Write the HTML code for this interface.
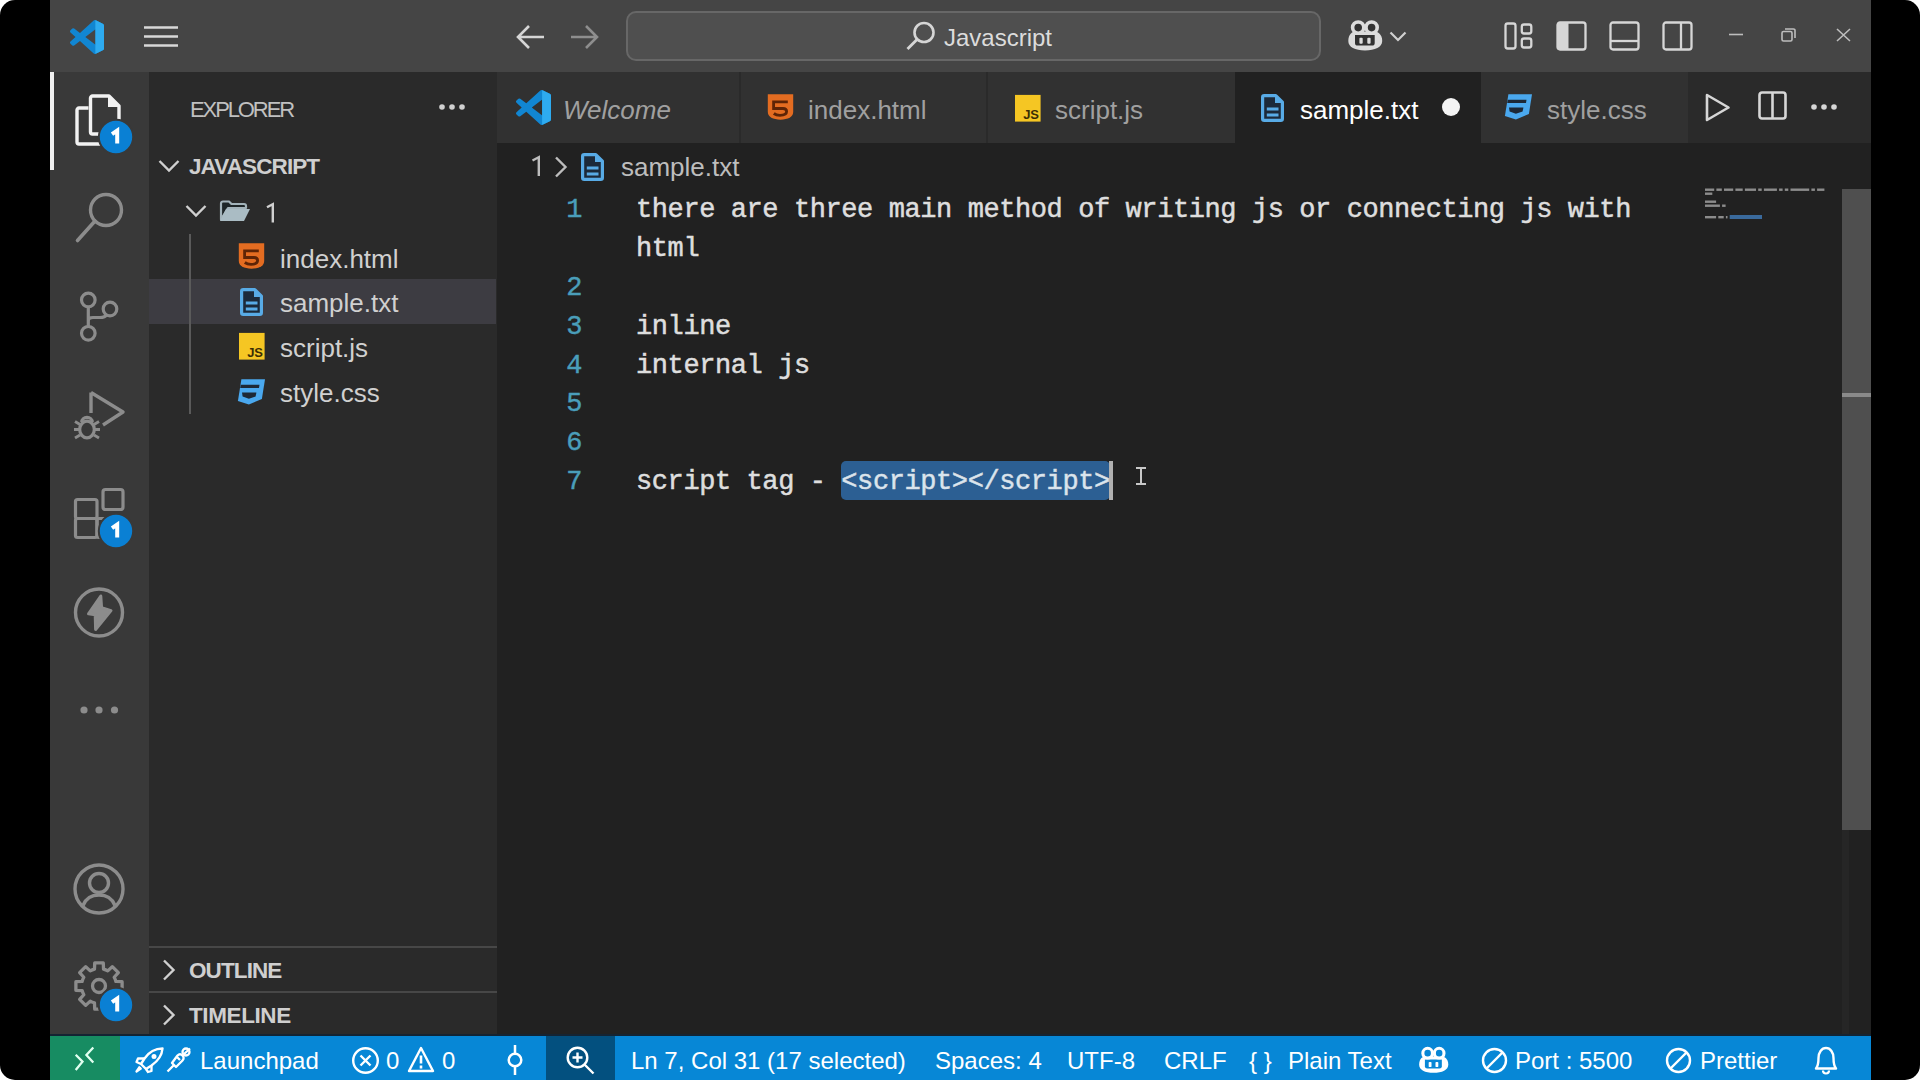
<!DOCTYPE html>
<html><head><meta charset="utf-8">
<style>
*{box-sizing:border-box;margin:0;padding:0}
html,body{width:1920px;height:1080px;overflow:hidden;background:#fff}
body{font-family:"Liberation Sans",sans-serif;position:relative}
.abs{position:absolute}
#frame{position:absolute;left:0;top:0;width:1920px;height:1080px;background:#000;border-radius:15px;overflow:hidden}
#title{left:50px;top:0;width:1821px;height:72px;background:#454545}
#act{left:50px;top:72px;width:99px;height:964px;background:#393939}
#side{left:149px;top:72px;width:348px;height:964px;background:#2a2a2a}
#tabs{left:497px;top:72px;width:1374px;height:71px;background:#2a2a2a}
#editor{left:497px;top:143px;width:1374px;height:893px;background:#212121}
#status{left:50px;top:1036px;width:1821px;height:44px;background:#0787d6}
.tab{position:absolute;top:72px;height:71px;background:#313131;border-right:2px solid #2a2a2a}
.tab.active{background:#212121}
.ttxt{position:absolute;top:95px;font-size:26px;color:#a0a0a0;white-space:pre;line-height:30px}
.row{position:absolute;left:149px;width:348px;height:45px}
.ftxt{position:absolute;font-size:26px;color:#d0d0d0;white-space:pre;line-height:30px}
.code{position:absolute;left:636px;margin-top:2px;-webkit-text-stroke:0.5px #dedede;font-family:"Liberation Mono",monospace;font-size:27px;letter-spacing:-0.41px;color:#dedede;white-space:pre;line-height:39px}
.ln{position:absolute;left:540px;margin-top:2px;-webkit-text-stroke:0.4px #4a9eba;width:42px;text-align:right;font-family:"Liberation Mono",monospace;font-size:27px;letter-spacing:-0.41px;color:#4a9eba;line-height:39px}
.st{position:absolute;top:1046px;font-size:24px;color:#fff;white-space:pre;line-height:30px}
svg{position:absolute;overflow:visible}
.badge{width:33px;height:33px;border-radius:50%;background:#0a7fd2;color:#fff;font-weight:bold;font-size:19px;line-height:33px;text-align:center;box-shadow:0 0 0 2px #393939}
</style></head><body>
<div id="frame">
<div id="title" class="abs"></div>
<div id="act" class="abs"></div>
<div id="side" class="abs"></div>
<div id="tabs" class="abs"></div>
<div id="editor" class="abs"></div>
<div id="status" class="abs"></div>


<!-- activity bar -->
<div class="abs" style="left:50px;top:72px;width:4px;height:98px;background:#f0f0f0"></div>
<svg style="left:74px;top:94px" width="50" height="52" viewBox="0 0 50 52"><path d="M14.5 14H5a2 2 0 0 0-2 2V48a2 2 0 0 0 2 2H28a2 2 0 0 0 2-2V42" fill="none" stroke="#f2f2f2" stroke-width="3.4"/><path d="M16.5 4a2 2 0 0 1 2-2H35L45 12V38a2 2 0 0 1-2 2H18.5a2 2 0 0 1-2-2z" fill="none" stroke="#f2f2f2" stroke-width="3.4" stroke-linejoin="round"/><path d="M35 2V12H45" fill="#f2f2f2" stroke="#f2f2f2" stroke-width="2"/></svg>
<svg style="left:75px;top:192px" width="50" height="52" viewBox="0 0 50 52"><circle cx="31" cy="18" r="15.5" fill="none" stroke="#8c8c8c" stroke-width="3.4"/><path d="M20 29L2.5 48.5" stroke="#8c8c8c" stroke-width="3.6" stroke-linecap="round"/></svg>
<svg style="left:75px;top:288px" width="50" height="56" viewBox="0 0 50 56"><circle cx="13.3" cy="12" r="6.8" fill="none" stroke="#8c8c8c" stroke-width="3.2"/><circle cx="35" cy="21" r="6.8" fill="none" stroke="#8c8c8c" stroke-width="3.2"/><circle cx="13.3" cy="45.3" r="6.8" fill="none" stroke="#8c8c8c" stroke-width="3.2"/><path d="M13.3 18.8V38.5M13.3 33C13.3 31 15 29.5 18 29.5H25C29 29.5 31 28 32 26.5" fill="none" stroke="#8c8c8c" stroke-width="3.2"/></svg>
<svg style="left:72px;top:388px" width="56" height="56" viewBox="0 0 56 56"><path d="M19 4.5V25M19 4.5L51 24L31 37" fill="none" stroke="#8c8c8c" stroke-width="3.4" stroke-linejoin="round"/><ellipse cx="15" cy="41.5" rx="7.3" ry="8.3" fill="none" stroke="#8c8c8c" stroke-width="3.2"/><path d="M9.8 34a5.2 4.6 0 0 1 10.4 0" fill="none" stroke="#8c8c8c" stroke-width="3.2"/><path d="M2 41.5H7.5M22.5 41.5H28M3 33.5L8 36.5M27 33.5L22 36.5M3 50L8 47M27 50L22 47" stroke="#8c8c8c" stroke-width="2.8"/></svg>
<svg style="left:73px;top:487px" width="54" height="54" viewBox="0 0 54 54"><rect x="2.5" y="12.5" width="21.5" height="19" rx="2" fill="none" stroke="#8c8c8c" stroke-width="3.2"/><rect x="2.5" y="31.5" width="21.5" height="19" rx="2" fill="none" stroke="#8c8c8c" stroke-width="3.2"/><rect x="24" y="31.5" width="21.5" height="19" rx="2" fill="none" stroke="#8c8c8c" stroke-width="3.2"/><rect x="30" y="2.5" width="20" height="20" rx="2.5" fill="none" stroke="#8c8c8c" stroke-width="3.2"/></svg>
<svg style="left:73px;top:586px" width="52" height="52" viewBox="0 0 52 52"><circle cx="26" cy="26.5" r="23.5" fill="none" stroke="#8c8c8c" stroke-width="3.4"/><path d="M27.8 10L15.5 27.8L22.2 28.8L22.6 43.5L38 24.6L28.6 21.8Z" fill="#8c8c8c" stroke="#8c8c8c" stroke-width="3" stroke-linejoin="round"/></svg>
<svg style="left:79px;top:705px" width="40" height="10" viewBox="0 0 40 10"><circle cx="5" cy="5" r="3.6" fill="#8c8c8c"/><circle cx="20" cy="5" r="3.6" fill="#8c8c8c"/><circle cx="35.5" cy="5" r="3.6" fill="#8c8c8c"/></svg>
<svg style="left:73px;top:863px" width="52" height="52" viewBox="0 0 52 52"><circle cx="26" cy="26" r="24" fill="none" stroke="#8c8c8c" stroke-width="3.4"/><circle cx="26" cy="20" r="9.5" fill="none" stroke="#8c8c8c" stroke-width="3.4"/><path d="M10 42.5C13 35 19 32 26 32S39 35 42 42.5" fill="none" stroke="#8c8c8c" stroke-width="3.4"/></svg>
<svg style="left:73px;top:960px" width="52" height="52" viewBox="-26 -26 52 52"><path fill="none" stroke="#8c8c8c" stroke-width="3.3" stroke-linejoin="round" d="M-4.53 -16.90L-4.28 -23.11L4.28 -23.11L4.53 -16.90A17.5 17.5 0 0 1 8.75 -15.16L13.31 -19.37L19.37 -13.31L15.16 -8.75A17.5 17.5 0 0 1 16.90 -4.53L23.11 -4.28L23.11 4.28L16.90 4.53A17.5 17.5 0 0 1 15.16 8.75L19.37 13.31L13.31 19.37L8.75 15.16A17.5 17.5 0 0 1 4.53 16.90L4.28 23.11L-4.28 23.11L-4.53 16.90A17.5 17.5 0 0 1 -8.75 15.16L-13.31 19.37L-19.37 13.31L-15.16 8.75A17.5 17.5 0 0 1 -16.90 4.53L-23.11 4.28L-23.11 -4.28L-16.90 -4.53A17.5 17.5 0 0 1 -15.16 -8.75L-19.37 -13.31L-13.31 -19.37L-8.75 -15.16A17.5 17.5 0 0 1 -4.53 -16.90Z"/><circle cx="0" cy="0" r="6.5" fill="none" stroke="#8c8c8c" stroke-width="3.3"/></svg>
<svg style="left:96.5px;top:117.5px" width="38" height="38" viewBox="0 0 38 38"><circle cx="19" cy="19" r="17.2" fill="#0a80d4" stroke="#393939" stroke-width="2"/><path d="M15 16.2L20.2 12.6V25.5" fill="none" stroke="#fff" stroke-width="4" stroke-linejoin="miter"/></svg>
<svg style="left:96.5px;top:511.5px" width="38" height="38" viewBox="0 0 38 38"><circle cx="19" cy="19" r="17.2" fill="#0a80d4" stroke="#393939" stroke-width="2"/><path d="M15 16.2L20.2 12.6V25.5" fill="none" stroke="#fff" stroke-width="4" stroke-linejoin="miter"/></svg>
<svg style="left:96.5px;top:985.5px" width="38" height="38" viewBox="0 0 38 38"><circle cx="19" cy="19" r="17.2" fill="#0a80d4" stroke="#393939" stroke-width="2"/><path d="M15 16.2L20.2 12.6V25.5" fill="none" stroke="#fff" stroke-width="4" stroke-linejoin="miter"/></svg>


<!-- sidebar -->
<div class="abs" style="left:190px;top:95px;font-size:22px;color:#c0c0c0;line-height:30px;letter-spacing:-2.1px;white-space:pre">EXPLORER</div>
<svg style="left:438px;top:103px" width="28" height="8" viewBox="0 0 28 8"><circle cx="4" cy="4" r="2.8" fill="#d0d0d0"/><circle cx="14" cy="4" r="2.8" fill="#d0d0d0"/><circle cx="24" cy="4" r="2.8" fill="#d0d0d0"/></svg>
<svg style="left:158px;top:159px" width="22" height="14" viewBox="0 0 22 14"><path d="M1.5 2L11 11.5L20.5 2" fill="none" stroke="#d0d0d0" stroke-width="2.4"/></svg>
<div class="abs" style="left:189px;top:152px;font-size:22.5px;font-weight:bold;color:#cfcfcf;line-height:30px;letter-spacing:-0.9px;white-space:pre">JAVASCRIPT</div>
<svg style="left:185px;top:204px" width="22" height="14" viewBox="0 0 22 14"><path d="M1.5 2L11 11.5L20.5 2" fill="none" stroke="#d0d0d0" stroke-width="2.4"/></svg>
<svg style="left:219px;top:200px" width="32" height="22" viewBox="0 0 32 22"><path d="M2 3.5a2 2 0 0 1 2-2H10l2.5 2.5H25a2 2 0 0 1 2 2V8H9L2 19.5z" fill="#1e2628" stroke="#a3b3ba" stroke-width="2.2" stroke-linejoin="round"/><path d="M7 9H31L25 21H1z" fill="#aabcc4"/></svg>
<svg style="left:264px;top:203px" width="14" height="20" viewBox="0 0 14 20"><path d="M3 4.2L8.8 1.2V19.5" fill="none" stroke="#d0d0d0" stroke-width="2.4"/></svg>
<div class="abs" style="left:149px;top:279px;width:347px;height:45px;background:#3d3c42"></div>
<div class="abs" style="left:189px;top:234px;width:2px;height:180px;background:#5a5a5a"></div>
<svg style="left:237px;top:242px" width="30" height="30" viewBox="0 0 30 30"><path d="M1.8 1.3H27.2V19C27.2 24 22 26.5 14.5 26.7C7 26.5 1.8 24 1.8 19Z" fill="#e36c21"/><path d="M21.8 8.8H7.6V15.5H17C19.5 15.5 20.6 17 20.6 18.6C20.6 21 18 22.3 14 22.3C11.2 22.3 9.3 21.6 7.8 20.5" fill="none" stroke="#5e2406" stroke-width="2.8"/></svg>
<div class="ftxt" style="left:280px;top:244px">index.html</div>
<svg style="left:239px;top:287px" width="26" height="30" viewBox="0 0 26 30"><path d="M4.2 2.6H15.8L22.4 9.2V25.8a1.6 1.6 0 0 1-1.6 1.6H4.2a1.6 1.6 0 0 1-1.6-1.6V4.2a1.6 1.6 0 0 1 1.6-1.6z" fill="#1c2a3a" stroke="#58abe6" stroke-width="3.2" stroke-linejoin="round"/><path d="M15 1.2V10H24z" fill="#58abe6"/><path d="M6.8 16.1H18.5M6.8 22H18.5" stroke="#58abe6" stroke-width="3"/></svg>
<div class="ftxt" style="left:280px;top:288px">sample.txt</div>
<svg style="left:238px;top:332px" width="28" height="29" viewBox="0 0 28 29"><rect x="1" y="0.9" width="25.6" height="26.7" fill="#f5c623"/><text x="24.6" y="24.5" font-family="Liberation Sans" font-weight="bold" font-size="13" letter-spacing="-0.3" fill="#3b2e05" text-anchor="end">JS</text></svg>
<div class="ftxt" style="left:280px;top:333px">script.js</div>
<svg style="left:237px;top:378px" width="30" height="29" viewBox="0 0 30 29"><path d="M4.4 1.3H28L24.9 21L11.9 26.5L0.9 23Z" fill="#4aa8ee"/><path d="M3.7 6.8H22.5L22 10H3.2Z" fill="#1d2836"/><path d="M5 14.6H19.4L18.6 18.6L11.9 20.8L5.6 18.6Z" fill="#1d2836"/></svg>
<div class="ftxt" style="left:280px;top:378px">style.css</div>
<div class="abs" style="left:149px;top:946px;width:348px;height:2px;background:#474747"></div>
<svg style="left:162px;top:959px" width="14" height="22" viewBox="0 0 14 22"><path d="M2 1.5L11.5 11L2 20.5" fill="none" stroke="#d0d0d0" stroke-width="2.4"/></svg>
<div class="abs" style="left:189px;top:956px;font-size:22.5px;font-weight:bold;color:#cfcfcf;line-height:30px;letter-spacing:-0.9px;white-space:pre">OUTLINE</div>
<div class="abs" style="left:149px;top:991px;width:348px;height:2px;background:#474747"></div>
<svg style="left:162px;top:1004px" width="14" height="22" viewBox="0 0 14 22"><path d="M2 1.5L11.5 11L2 20.5" fill="none" stroke="#d0d0d0" stroke-width="2.4"/></svg>
<div class="abs" style="left:189px;top:1001px;font-size:22.5px;font-weight:bold;color:#cfcfcf;line-height:30px;letter-spacing:-0.4px;white-space:pre">TIMELINE</div>


<!-- tabs -->
<div class="tab" style="left:497px;width:244px"></div>
<div class="tab" style="left:741px;width:247px"></div>
<div class="tab" style="left:988px;width:247px;border-right:none"></div>
<div class="tab active" style="left:1235px;width:246px;border-right:none"></div>
<div class="tab" style="left:1481px;width:207px;border-right:none"></div>
<svg style="left:516px;top:90px" width="35" height="35" viewBox="0 0 24 24"><defs><linearGradient id="lg" x1="0" x2="1"><stop offset="0" stop-color="#1a8ad4"/><stop offset="1" stop-color="#2aa8ef"/></linearGradient></defs><path fill="#1186d2" d="M23.15 2.587L18.21.21a1.494 1.494 0 0 0-1.705.29l-9.46 8.63-4.12-3.128a.999.999 0 0 0-1.276.057L.327 7.261A1 1 0 0 0 .326 8.74L3.899 12 .326 15.26a1 1 0 0 0 .001 1.479L1.65 17.94a.999.999 0 0 0 1.276.057l4.12-3.128 9.46 8.63a1.492 1.492 0 0 0 1.704.29l4.942-2.377A1.5 1.5 0 0 0 24 20.06V3.939a1.5 1.5 0 0 0-.85-1.352zm-5.146 14.861L10.826 12l7.178-5.448v10.896z"/><path d="M17.9 0.1L18.21.21L23.15 2.587A1.5 1.5 0 0 1 24 3.939V20.06a1.5 1.5 0 0 1-.85 1.353L18.2 23.79L17.9 23.9Z" fill="#2eabf0"/></svg>
<div class="ttxt" style="left:563px;font-style:italic">Welcome</div>
<svg style="left:766px;top:92.5px" width="30" height="30" viewBox="0 0 30 30"><path d="M1.8 1.3H27.2V19C27.2 24 22 26.5 14.5 26.7C7 26.5 1.8 24 1.8 19Z" fill="#e36c21"/><path d="M21.8 8.8H7.6V15.5H17C19.5 15.5 20.6 17 20.6 18.6C20.6 21 18 22.3 14 22.3C11.2 22.3 9.3 21.6 7.8 20.5" fill="none" stroke="#5e2406" stroke-width="2.8"/></svg>
<div class="ttxt" style="left:808px">index.html</div>
<svg style="left:1013.5px;top:94px" width="28" height="29" viewBox="0 0 28 29"><rect x="1" y="0.9" width="25.6" height="26.7" fill="#f5c623"/><text x="24.6" y="24.5" font-family="Liberation Sans" font-weight="bold" font-size="13" letter-spacing="-0.3" fill="#3b2e05" text-anchor="end">JS</text></svg>
<div class="ttxt" style="left:1055px">script.js</div>
<svg style="left:1260px;top:93px" width="26" height="30" viewBox="0 0 26 30"><path d="M4.2 2.6H15.8L22.4 9.2V25.8a1.6 1.6 0 0 1-1.6 1.6H4.2a1.6 1.6 0 0 1-1.6-1.6V4.2a1.6 1.6 0 0 1 1.6-1.6z" fill="#1c2a3a" stroke="#58abe6" stroke-width="3.2" stroke-linejoin="round"/><path d="M15 1.2V10H24z" fill="#58abe6"/><path d="M6.8 16.1H18.5M6.8 22H18.5" stroke="#58abe6" stroke-width="3"/></svg>
<div class="ttxt" style="left:1300px;color:#ffffff">sample.txt</div>
<div class="abs" style="left:1442px;top:98px;width:18px;height:18px;border-radius:50%;background:#f4f4f4"></div>
<svg style="left:1503.6px;top:92.7px" width="30" height="29" viewBox="0 0 30 29"><path d="M4.4 1.3H28L24.9 21L11.9 26.5L0.9 23Z" fill="#4aa8ee"/><path d="M3.7 6.8H22.5L22 10H3.2Z" fill="#1d2836"/><path d="M5 14.6H19.4L18.6 18.6L11.9 20.8L5.6 18.6Z" fill="#1d2836"/></svg>
<div class="ttxt" style="left:1547px">style.css</div>
<svg style="left:1705px;top:93px" width="26" height="30" viewBox="0 0 26 30"><path d="M2 2L23.5 14.5L2 27z" fill="none" stroke="#d6d6d6" stroke-width="2.6" stroke-linejoin="round"/></svg>
<svg style="left:1758px;top:91px" width="30" height="30" viewBox="0 0 30 30"><rect x="1.5" y="1.5" width="26" height="26" rx="2.5" fill="none" stroke="#d6d6d6" stroke-width="2.6"/><path d="M14.5 1.5V27.5" stroke="#d6d6d6" stroke-width="2.6"/></svg>
<svg style="left:1810px;top:103px" width="28" height="8" viewBox="0 0 28 8"><circle cx="4" cy="4" r="2.8" fill="#d6d6d6"/><circle cx="14" cy="4" r="2.8" fill="#d6d6d6"/><circle cx="24" cy="4" r="2.8" fill="#d6d6d6"/></svg>
<!-- editor -->
<svg style="left:530px;top:156px" width="14" height="21" viewBox="0 0 14 21"><path d="M2.5 4.5L8.8 1.3V20" fill="none" stroke="#bdbdbd" stroke-width="2.4"/></svg>
<svg style="left:554px;top:156px" width="14" height="22" viewBox="0 0 14 22"><path d="M2 1.5L11.5 11L2 20.5" fill="none" stroke="#bdbdbd" stroke-width="2.4"/></svg>
<svg style="left:580px;top:151.5px" width="26" height="30" viewBox="0 0 26 30"><path d="M4.2 2.6H15.8L22.4 9.2V25.8a1.6 1.6 0 0 1-1.6 1.6H4.2a1.6 1.6 0 0 1-1.6-1.6V4.2a1.6 1.6 0 0 1 1.6-1.6z" fill="#1c2a3a" stroke="#58abe6" stroke-width="3.2" stroke-linejoin="round"/><path d="M15 1.2V10H24z" fill="#58abe6"/><path d="M6.8 16.1H18.5M6.8 22H18.5" stroke="#58abe6" stroke-width="3"/></svg>
<div class="abs" style="left:621px;top:152px;font-size:26px;color:#bdbdbd;line-height:30px;white-space:pre">sample.txt</div>
<div class="abs" style="left:841px;top:461px;width:269px;height:39px;border-radius:5px;background:#2c5f93"></div>
<div class="abs" style="left:1109px;top:461px;width:4px;height:39px;background:#b0b0b0"></div>
<div class="ln" style="top:189px">1</div>
<div class="ln" style="top:267px">2</div>
<div class="ln" style="top:306px">3</div>
<div class="ln" style="top:345px">4</div>
<div class="ln" style="top:383px">5</div>
<div class="ln" style="top:422px">6</div>
<div class="ln" style="top:461px">7</div>
<div class="code" style="top:189px">there are three main method of writing js or connecting js with</div>
<div class="code" style="top:228px">html</div>
<div class="code" style="top:306px">inline</div>
<div class="code" style="top:345px">internal js</div>
<div class="code" style="top:461px">script tag - <span style="color:#d8e6f2">&lt;script&gt;&lt;/script&gt;</span></div>
<svg style="left:1135px;top:467px" width="12" height="18" viewBox="0 0 12 18"><path d="M1 1H11M1 17H11M6 1V17" stroke="#c8c8c8" stroke-width="2"/></svg>
<!-- minimap -->
<svg style="left:1705px;top:186px" width="125" height="40" viewBox="0 0 125 40"><rect x="0.0" y="2.5" width="9.2" height="2.4" fill="#8c8c8c"/><rect x="11.4" y="2.5" width="5.4" height="2.4" fill="#8c8c8c"/><rect x="19.0" y="2.5" width="9.2" height="2.4" fill="#8c8c8c"/><rect x="30.4" y="2.5" width="7.3" height="2.4" fill="#8c8c8c"/><rect x="39.9" y="2.5" width="11.1" height="2.4" fill="#8c8c8c"/><rect x="53.2" y="2.5" width="3.5" height="2.4" fill="#8c8c8c"/><rect x="58.9" y="2.5" width="13.0" height="2.4" fill="#8c8c8c"/><rect x="74.1" y="2.5" width="3.5" height="2.4" fill="#8c8c8c"/><rect x="79.8" y="2.5" width="3.5" height="2.4" fill="#8c8c8c"/><rect x="85.5" y="2.5" width="18.7" height="2.4" fill="#8c8c8c"/><rect x="106.4" y="2.5" width="3.5" height="2.4" fill="#8c8c8c"/><rect x="112.1" y="2.5" width="7.3" height="2.4" fill="#8c8c8c"/><rect x="0.0" y="6.5" width="7.3" height="2.4" fill="#8c8c8c"/><rect x="0.0" y="14.5" width="11.1" height="2.4" fill="#8c8c8c"/><rect x="0.0" y="18.5" width="14.9" height="2.4" fill="#8c8c8c"/><rect x="17.1" y="18.5" width="3.5" height="2.4" fill="#8c8c8c"/><rect x="0.0" y="30" width="11.1" height="2.4" fill="#8c8c8c"/><rect x="13.3" y="30" width="5.4" height="2.4" fill="#8c8c8c"/><rect x="20.9" y="30" width="1.6" height="2.4" fill="#8c8c8c"/><rect x="24.7" y="29" width="32.3" height="4" fill="#3a6a9c"/></svg>
<div class="abs" style="left:1842px;top:830px;width:7px;height:204px;background:#262626"></div>
<div class="abs" style="left:1842px;top:189px;width:29px;height:641px;background:#4f4f4f"></div>
<div class="abs" style="left:1842px;top:393px;width:29px;height:4px;background:#8a8a8a"></div>
<!-- status bar -->
<div class="abs" style="left:50px;top:1036px;width:70px;height:44px;background:#178c62"></div>
<svg style="left:73px;top:1045px" width="24" height="28" viewBox="0 0 24 28"><path d="M2.7 9.8L9.5 16.6L2.7 25M20.3 2.4L13.4 10L20.3 17.6" fill="none" stroke="#e0fff0" stroke-width="2.3"/></svg>
<div class="abs" style="left:546px;top:1036px;width:69px;height:44px;background:#03507f"></div>
<div class="abs" style="left:50px;top:1034px;width:1821px;height:2px;background:#142433"></div>
<svg style="left:135px;top:1047px" width="30" height="26" viewBox="0 0 30 26"><path d="M27.5 1.5C20 1.5 14 5 9.5 11.5L6 17L11 22L16.5 18.5C23 14 27 8 27.5 1.5z" fill="none" stroke="#fff" stroke-width="2.4" stroke-linejoin="round"/><circle cx="19" cy="9.5" r="2.5" fill="#fff"/><path d="M9.5 11.5H3L1.5 15L6 17M16.5 18.5V24L13 25L11 22M5 19.5L1.5 24.5L6.5 21" fill="none" stroke="#fff" stroke-width="2.3" stroke-linejoin="round"/></svg>
<svg style="left:166px;top:1047px" width="26" height="26" viewBox="0 0 26 26"><path d="M6 16L10 20L16.5 13.5C18 12 18 10 16.5 8.5C15 7 13 7 11.5 8.5z" fill="none" stroke="#fff" stroke-width="2.3" stroke-linejoin="round"/><path d="M16.5 8.5L24 1.5M1.5 24.5L8 18M11 10L14 13" fill="none" stroke="#fff" stroke-width="2.3"/><circle cx="20" cy="5" r="3.5" fill="none" stroke="#fff" stroke-width="2.3"/></svg>
<div class="st" style="left:200px">Launchpad</div>
<svg style="left:351px;top:1046px" width="29" height="29" viewBox="0 0 29 29"><circle cx="14.5" cy="14.5" r="12.3" fill="none" stroke="#fff" stroke-width="2.4"/><path d="M9.5 9.5L19.5 19.5M19.5 9.5L9.5 19.5" stroke="#fff" stroke-width="2.4"/></svg>
<div class="st" style="left:386px">0</div>
<svg style="left:407px;top:1046px" width="28" height="27" viewBox="0 0 28 27"><path d="M14 2L26 25H2z" fill="none" stroke="#fff" stroke-width="2.4" stroke-linejoin="round"/><path d="M14 9.5V17.5M14 19.5V22.5" stroke="#fff" stroke-width="2.6"/></svg>
<div class="st" style="left:442px">0</div>
<svg style="left:505px;top:1045px" width="20" height="30" viewBox="0 0 20 30"><circle cx="10" cy="15" r="6.3" fill="none" stroke="#fff" stroke-width="2.5"/><path d="M10 0V8.5M10 21.5V30" stroke="#fff" stroke-width="2.5"/></svg>
<svg style="left:566px;top:1046px" width="29" height="29" viewBox="0 0 29 29"><circle cx="11.5" cy="11.5" r="9.8" fill="none" stroke="#fff" stroke-width="2.4"/><path d="M18.5 18.5L27.5 27.5M11.5 6.5V16.5M6.5 11.5H16.5" stroke="#fff" stroke-width="2.4"/></svg>
<div class="st" style="left:631px">Ln 7, Col 31 (17 selected)</div>
<div class="st" style="left:935px">Spaces: 4</div>
<div class="st" style="left:1067px">UTF-8</div>
<div class="st" style="left:1164px">CRLF</div>
<div class="st" style="left:1249px">{ }</div>
<div class="st" style="left:1288px">Plain Text</div>
<svg style="left:1411.6px;top:1037.5px" width="43.0" height="38.7" viewBox="0 0 50 45"><path d="M8.3 31C8.3 24 12.5 21.5 15 21.5H35C37.5 21.5 42.2 24 42.2 31C42.2 37 35 40.5 25 40.5C15 40.5 8.3 37 8.3 31Z" fill="#ffffff"/><path d="M15 25H34.7V33Q34.7 35.6 32 35.6H17.7Q15 35.6 15 33Z" fill="#0787d6"/><rect x="19.4" y="27.8" width="3.3" height="6" rx="1" fill="#ffffff"/><rect x="27.3" y="27.8" width="3.3" height="6" rx="1" fill="#ffffff"/><circle cx="18.2" cy="17.6" r="5.6" fill="#0787d6" stroke="#ffffff" stroke-width="3.6"/><circle cx="31.6" cy="17.6" r="5.6" fill="#0787d6" stroke="#ffffff" stroke-width="3.6"/></svg>
<svg style="left:1481px;top:1047px" width="27" height="27" viewBox="0 0 27 27"><circle cx="13.5" cy="13.5" r="11.5" fill="none" stroke="#fff" stroke-width="2.4"/><path d="M5.5 21.5L21.5 5.5" stroke="#fff" stroke-width="2.4"/></svg>
<div class="st" style="left:1515px">Port : 5500</div>
<svg style="left:1665px;top:1047px" width="27" height="27" viewBox="0 0 27 27"><circle cx="13.5" cy="13.5" r="11.5" fill="none" stroke="#fff" stroke-width="2.4"/><path d="M5.5 21.5L21.5 5.5" stroke="#fff" stroke-width="2.4"/></svg>
<div class="st" style="left:1700px">Prettier</div>
<svg style="left:1814px;top:1046px" width="24" height="28" viewBox="0 0 24 28"><path d="M2 22.5C4 20 4.5 18 4.5 12C4.5 6.5 7.5 2 12 2S19.5 6.5 19.5 12C19.5 18 20 20 22 22.5z" fill="none" stroke="#fff" stroke-width="2.4" stroke-linejoin="round"/><path d="M9 24.5a3 3 0 0 0 6 0" fill="none" stroke="#fff" stroke-width="2.2"/></svg>

<!-- title bar content -->
<svg style="left:70px;top:20px" width="34" height="34" viewBox="0 0 24 24"><path fill="#1186d2" d="M23.15 2.587L18.21.21a1.494 1.494 0 0 0-1.705.29l-9.46 8.63-4.12-3.128a.999.999 0 0 0-1.276.057L.327 7.261A1 1 0 0 0 .326 8.74L3.899 12 .326 15.26a1 1 0 0 0 .001 1.479L1.65 17.94a.999.999 0 0 0 1.276.057l4.12-3.128 9.46 8.63a1.492 1.492 0 0 0 1.704.29l4.942-2.377A1.5 1.5 0 0 0 24 20.06V3.939a1.5 1.5 0 0 0-.85-1.352zm-5.146 14.861L10.826 12l7.178-5.448v10.896z"/><path d="M17.9 0.1L18.21.21L23.15 2.587A1.5 1.5 0 0 1 24 3.939V20.06a1.5 1.5 0 0 1-.85 1.353L18.2 23.79L17.9 23.9Z" fill="#2eabf0"/></svg>
<svg style="left:143px;top:25px" width="36" height="24" viewBox="0 0 36 24"><path d="M1 2.5H35M1 11.5H35M1 20.5H35" stroke="#d8d8d8" stroke-width="2.6"/></svg>
<svg style="left:516px;top:24px" width="30" height="26" viewBox="0 0 30 26"><path d="M28 13H3M13 2L2 13L13 24" fill="none" stroke="#d6d6d6" stroke-width="2.6"/></svg>
<svg style="left:569px;top:24px" width="30" height="26" viewBox="0 0 30 26"><path d="M2 13H27M17 2L28 13L17 24" fill="none" stroke="#8e8e8e" stroke-width="2.6"/></svg>
<div class="abs" style="left:626px;top:11px;width:695px;height:50px;border-radius:10px;background:#4f4f4f;border:2px solid #676767"></div>
<svg style="left:906px;top:21px" width="30" height="30" viewBox="0 0 30 30"><circle cx="18" cy="11.5" r="9.5" fill="none" stroke="#d6d6d6" stroke-width="2.6"/><path d="M11 18.5L1.5 28" stroke="#d6d6d6" stroke-width="2.8"/></svg>
<div class="abs" style="left:944px;top:23px;font-size:24px;color:#dcdcdc;line-height:30px;white-space:pre">Javascript</div>
<svg style="left:1340px;top:10px" width="50.0" height="45.0" viewBox="0 0 50 45"><path d="M8.3 31C8.3 24 12.5 21.5 15 21.5H35C37.5 21.5 42.2 24 42.2 31C42.2 37 35 40.5 25 40.5C15 40.5 8.3 37 8.3 31Z" fill="#dcdcdc"/><path d="M15 25H34.7V33Q34.7 35.6 32 35.6H17.7Q15 35.6 15 33Z" fill="#323232"/><rect x="19.4" y="27.8" width="3.3" height="6" rx="1" fill="#dcdcdc"/><rect x="27.3" y="27.8" width="3.3" height="6" rx="1" fill="#dcdcdc"/><circle cx="18.2" cy="17.6" r="5.6" fill="#323232" stroke="#dcdcdc" stroke-width="3.6"/><circle cx="31.6" cy="17.6" r="5.6" fill="#323232" stroke="#dcdcdc" stroke-width="3.6"/></svg>
<svg style="left:1389px;top:31px" width="18" height="11" viewBox="0 0 18 11"><path d="M1.5 1.5L9 9L16.5 1.5" fill="none" stroke="#d0d0d0" stroke-width="2.2"/></svg>
<svg style="left:1504px;top:22px" width="30" height="28" viewBox="0 0 30 28"><rect x="1.5" y="1.5" width="10" height="25" rx="2.2" fill="none" stroke="#d6d6d6" stroke-width="2.3"/><rect x="17.8" y="2.5" width="9.5" height="9" rx="2.2" fill="none" stroke="#d6d6d6" stroke-width="2.3"/><rect x="17.8" y="16.5" width="9.5" height="9" rx="2.2" fill="none" stroke="#d6d6d6" stroke-width="2.3"/></svg>
<svg style="left:1556px;top:21px" width="31" height="30" viewBox="0 0 31 30"><rect x="1.5" y="1.5" width="28" height="27" rx="2.5" fill="none" stroke="#d6d6d6" stroke-width="2.3"/><rect x="1.5" y="1.5" width="11" height="27" fill="#d6d6d6"/></svg>
<svg style="left:1609px;top:21px" width="31" height="30" viewBox="0 0 31 30"><rect x="1.5" y="1.5" width="28" height="27" rx="2.5" fill="none" stroke="#d6d6d6" stroke-width="2.3"/><path d="M1.5 20H29.5" stroke="#d6d6d6" stroke-width="2.3"/></svg>
<svg style="left:1662px;top:21px" width="31" height="30" viewBox="0 0 31 30"><rect x="1.5" y="1.5" width="28" height="27" rx="2.5" fill="none" stroke="#d6d6d6" stroke-width="2.3"/><path d="M19 1.5V28.5" stroke="#d6d6d6" stroke-width="2.3"/></svg>
<svg style="left:1729px;top:33px" width="14" height="3" viewBox="0 0 14 3"><path d="M0 1.5H14" stroke="#bdbdbd" stroke-width="1.6"/></svg>
<svg style="left:1781px;top:28px" width="15" height="14" viewBox="0 0 15 14"><rect x="1" y="3.5" width="10" height="9.5" rx="1.5" fill="none" stroke="#bdbdbd" stroke-width="1.6"/><path d="M4 1H12.5a1.5 1.5 0 0 1 1.5 1.5V10" fill="none" stroke="#bdbdbd" stroke-width="1.6"/></svg>
<svg style="left:1836px;top:28px" width="15" height="14" viewBox="0 0 15 14"><path d="M1 1L14 13M14 1L1 13" stroke="#bdbdbd" stroke-width="1.6"/></svg>
</div>
</body></html>
